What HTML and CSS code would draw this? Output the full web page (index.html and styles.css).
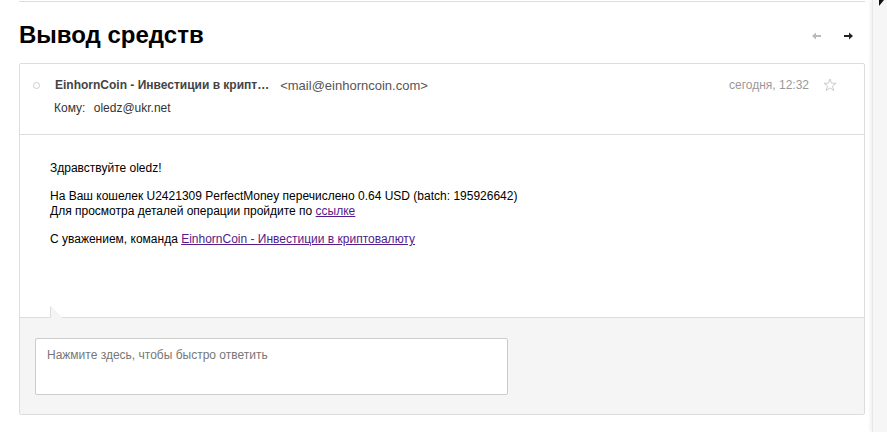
FILE: index.html
```html
<!DOCTYPE html>
<html lang="ru">
<head>
    <meta charset="UTF-8">
    <title>Вывод средств</title>
    <link rel="stylesheet" href="styles.css">
</head>
<body>
    <div class="page">
        <div class="main">
            <div class="toolbar-line"></div>
            <div class="title-row">
                <h1>Вывод средств</h1>
                <div class="nav">
                    <span class="nav-btn nav-prev">
                        <svg width="9" height="8" viewBox="0 0 9 8"><path d="M0 4 L4 0.5 L4 3 L9 3 L9 5 L4 5 L4 7.5 Z" fill="#bbb"/></svg>
                    </span>
                    <span class="nav-btn nav-next">
                        <svg width="9" height="8" viewBox="0 0 9 8"><path d="M9 4 L5 0.5 L5 3 L0 3 L0 5 L5 5 L5 7.5 Z" fill="#222"/></svg>
                    </span>
                </div>
            </div>

            <div class="letter">
                <div class="letter-head">
                    <div class="from-row">
                        <span class="dot"></span>
                        <span class="sender">EinhornCoin - Инвестиции в крипт…</span>
                        <span class="sender-mail">&lt;mail@einhorncoin.com&gt;</span>
                        <span class="date">сегодня, 12:32</span>
                        <svg class="star" width="14" height="14" viewBox="0 0 14 14"><path d="M7 1 L8.6 5.2 L13 5.3 L9.5 8 L10.8 12.5 L7 9.9 L3.2 12.5 L4.5 8 L1 5.3 L5.4 5.2 Z" fill="none" stroke="#ccc" stroke-width="1"/></svg>
                    </div>
                    <div class="to-row">
                        <span class="to-label">Кому:</span>
                        <span class="to-mail">oledz@ukr.net</span>
                    </div>
                </div>

                <div class="letter-body">
                    <p>Здравствуйте oledz!</p>
                    <p>На Ваш кошелек U2421309 PerfectMoney перечислено 0.64 USD (batch: 195926642)<br>
                    Для просмотра деталей операции пройдите по <a href="#">ссылке</a></p>
                    <p>С уважением, команда <a href="#">EinhornCoin - Инвестиции в криптовалюту</a></p>
                </div>

                <div class="reply">
                    <span class="reply-tail"></span>
                    <div class="reply-box">Нажмите здесь, чтобы быстро ответить</div>
                </div>
            </div>
        </div>
        <div class="side">
            <span class="side-corner"></span>
        </div>
    </div>
</body>
</html>
```

FILE: styles.css
```css
body {
    margin: 0;
    padding: 0;
    background-color: white;
    font-family: "Liberation Sans", Arial, sans-serif;
    font-size: 12px;
    color: #000;
}

.page {
    display: flex;
    height: 432px;
    overflow: hidden;
}

.main {
    flex: 1;
    padding: 0 7px 0 19px;
}

.toolbar-line {
    height: 1px;
    margin-top: 1px;
    background-color: #ddd;
}

.title-row {
    display: flex;
    align-items: center;
    justify-content: space-between;
    height: 61px;
}

.title-row h1 {
    margin: 0;
    font-size: 24px;
    font-weight: bold;
    padding-top: 4px;
}

.nav {
    display: flex;
    gap: 23px;
    padding-right: 12px;
    padding-top: 6px;
}

.nav-btn {
    display: flex;
}

.letter {
    border: 1px solid #ddd;
    border-radius: 2px;
}

.letter-head {
    padding: 13px 0 0 0;
    height: 57px;
    border-bottom: 1px solid #ddd;
}

.from-row {
    display: flex;
    align-items: center;
    height: 16px;
    padding-right: 27px;
}

.dot {
    width: 5px;
    height: 5px;
    border: 1px solid #ccc;
    border-radius: 50%;
    margin-left: 13px;
    margin-right: 15px;
}

.sender {
    font-weight: bold;
    color: #444;
}

.sender-mail {
    margin-left: 11px;
    font-size: 13px;
    color: #555;
}

.date {
    margin-left: auto;
    color: #999;
    margin-right: 14px;
}

.star {
    display: block;
}

.to-row {
    margin-top: 8px;
    padding-left: 34px;
    color: #333;
}

.to-mail {
    margin-left: 5px;
}

.letter-body {
    padding: 26px 30px 57px 30px;
    line-height: 15px;
}

.letter-body p {
    margin: 0 0 13px 0;
}

.letter-body a {
    color: #551a8b;
}

.reply {
    position: relative;
    background-color: #f5f5f5;
    border-top: 1px solid #ddd;
    padding: 20px 15px 19px 15px;
}

.reply-tail {
    position: absolute;
    left: 30px;
    top: -12px;
    width: 0;
    height: 0;
    border-left: 1px solid #ddd;
}

.reply-tail::before {
    content: "";
    position: absolute;
    left: -1px;
    top: 0;
    border-top: 12px solid transparent;
    border-left: 12px solid #ddd;
}

.reply-tail::after {
    content: "";
    position: absolute;
    left: 0;
    top: 1px;
    border-top: 11px solid transparent;
    border-left: 11px solid #f5f5f5;
}

.reply-box {
    width: 449px;
    height: 37px;
    padding: 9px 11px;
    background-color: white;
    border: 1px solid #ccc;
    border-radius: 2px;
    color: #777;
}

.side {
    position: relative;
    width: 14px;
    background-color: #f6f6f6;
    border-left: 1px solid #e8e8e8;
    box-shadow: -2px 0 3px rgba(0, 0, 0, 0.06);
}

.side-corner {
    position: absolute;
    left: 6px;
    top: 0;
    border-top: 6px solid #111;
    border-right: 5px solid transparent;
}
```
